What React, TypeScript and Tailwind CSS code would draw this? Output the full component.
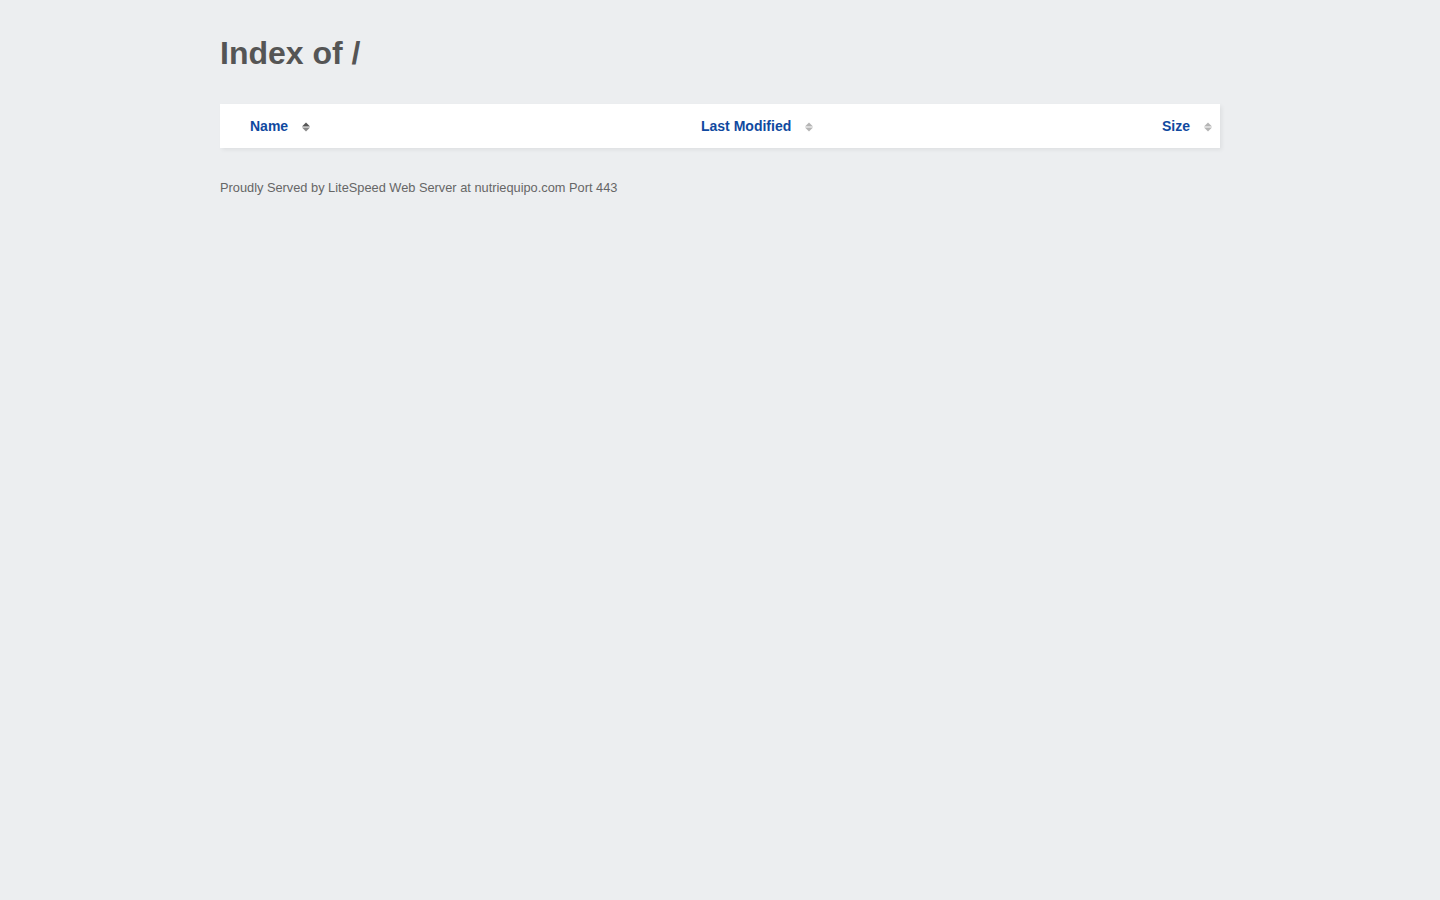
import React from "react";

// Up/down sort arrows next to each column header
const SortIcon = ({ up, down }: { up: string; down: string }) => (
  <svg width="8" height="10" viewBox="0 0 8 10" className="mt-[2px] shrink-0">
    <path d="M0 4.5 L4 0.5 L8 4.5 Z" fill={up} />
    <path d="M0 5.5 L4 9.5 L8 5.5 Z" fill={down} />
  </svg>
);

const HeaderLink = ({ children }: { children: React.ReactNode }) => (
  <a href="#" className="text-[14px] font-bold text-[#1049a0] no-underline">
    {children}
  </a>
);

export default function App() {
  return (
    <div
      className="min-h-screen bg-[#eceef0] text-[#555]"
      style={{ fontFamily: '"Liberation Sans", Arial, sans-serif' }}
    >
      <div className="mx-auto w-[1000px] pt-[34px]">
        <h1 className="text-[32px] font-bold leading-[38px] text-[#555]">Index of /</h1>

        <div className="mt-[32px] bg-white shadow-[2px_2px_4px_rgba(0,0,0,0.06)]">
          <div className="grid h-[44px] grid-cols-[451px_1fr_auto] items-center">
            <div className="flex items-center gap-[14px] pl-[30px]">
              <HeaderLink>Name</HeaderLink>
              <SortIcon up="#555" down="#888" />
            </div>
            <div className="flex items-center gap-[14px] pl-[30px]">
              <HeaderLink>Last Modified</HeaderLink>
              <SortIcon up="#b5b5b5" down="#b5b5b5" />
            </div>
            <div className="flex items-center gap-[14px] pr-[8px]">
              <HeaderLink>Size</HeaderLink>
              <SortIcon up="#b5b5b5" down="#b5b5b5" />
            </div>
          </div>
        </div>

        <p className="mt-[32px] text-[12.8px] leading-[16px] text-[#666]">
          Proudly Served by LiteSpeed Web Server at nutriequipo.com Port 443
        </p>
      </div>
    </div>
  );
}
